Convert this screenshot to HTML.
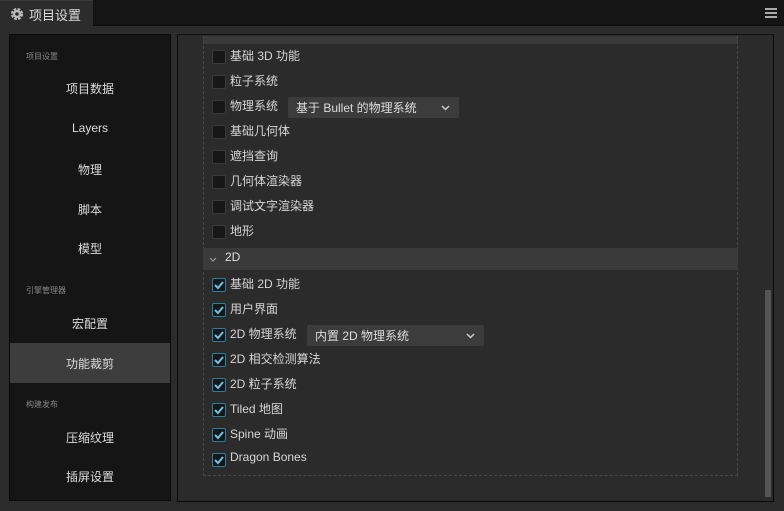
<!DOCTYPE html>
<html><head><meta charset="utf-8"><style>
*{margin:0;padding:0;box-sizing:border-box}
body{width:784px;height:511px;background:#2c2c2c;font-family:"Liberation Sans","Noto Sans CJK SC",sans-serif;color:#d6d6d6;font-size:12px;position:relative;overflow:hidden}
.top{position:absolute;left:0;top:0;width:784px;height:26px;background:#151515;border-bottom:1px solid #0c0c0c}
.tab{position:absolute;left:0;top:0;width:93px;height:26px;background:#2c2c2c;border-top:1px solid #3a3a3a}
.tab span{position:absolute;left:29px;top:4px;font-size:13px;color:#ddd}
.left{position:absolute;left:9px;top:34px;width:162px;height:467px;background:#151515;border:1px solid #0a0a0a}
.grp{position:absolute;left:16px;font-size:8px;color:#888}
.it{position:absolute;left:0;width:160px;text-align:center;font-size:12px;color:#ddd}
.sel{position:absolute;left:0;top:308px;width:160px;height:40px;background:#3d3d3d}
.right{position:absolute;left:177px;top:34px;width:597px;height:468px;background:#2b2b2b;border:1px solid #0a0a0a;border-top-color:#111}
.box{position:absolute;left:203px;top:36px;width:535px;height:440px;border-left:1px dashed #4a4a4a;border-right:1px dashed #4a4a4a;border-bottom:1px dashed #4a4a4a}
.hbar{position:absolute;left:203px;top:36px;width:535px;height:8px;background:#3a3a3a}
.h2{position:absolute;left:203px;top:248px;width:535px;height:22px;background:#3a3a3a}
.h2 span{position:absolute;left:22px;top:2px;color:#ddd}
.row{position:absolute;left:212px;height:14px}
.cb{position:absolute;left:0;top:0;width:14px;height:14px;background:#171717;border:1px solid #3a3a3a;border-radius:2px}
.cb.on{border-color:#2b7fa0;background:#171717}
.row .t{position:absolute;left:18px;top:-3px;white-space:nowrap;color:#d6d6d6}
.dd{position:absolute;height:21px;background:#3c3c3c;border-radius:2px;color:#ddd}
.dd span{position:absolute;left:8px;top:2px}
.sb{position:absolute;left:765px;top:290px;width:6px;height:207px;background:#555}
</style></head><body>
<div class="top"></div>
<div class="tab">
<svg style="position:absolute;left:10px;top:6px" width="14" height="14" viewBox="0 0 14 14"><circle cx="7" cy="7" r="4.5" fill="none" stroke="#bbb" stroke-width="3.2" stroke-dasharray="2.4 1.2"/><circle cx="7" cy="7" r="4" fill="#bbb"/><circle cx="7" cy="7" r="1.8" fill="#2c2c2c"/></svg>
<span>项目设置</span></div>
<svg style="position:absolute;left:765px;top:8px" width="12" height="11"><rect y="0" width="12" height="2" fill="#aaa"/><rect y="4" width="12" height="2" fill="#aaa"/><rect y="8" width="12" height="2" fill="#aaa"/></svg>
<div class="left">
<div class="grp" style="top:16px">项目设置</div>
<div class="it" style="top:45px">项目数据</div>
<div class="it" style="top:86px">Layers</div>
<div class="it" style="top:126px">物理</div>
<div class="it" style="top:166px">脚本</div>
<div class="it" style="top:205px">模型</div>
<div class="grp" style="top:250px">引擎管理器</div>
<div class="it" style="top:280px">宏配置</div>
<div class="sel"></div>
<div class="it" style="top:320px">功能裁剪</div>
<div class="grp" style="top:364px">构建发布</div>
<div class="it" style="top:394px">压缩纹理</div>
<div class="it" style="top:433px">插屏设置</div>
</div>
<div class="right"></div>
<div class="hbar"></div>
<div class="box"></div>
<div class="row" style="top:50px"><div class="cb"></div><div class="t">基础 3D 功能</div></div>
<div class="row" style="top:75px"><div class="cb"></div><div class="t">粒子系统</div></div>
<div class="row" style="top:100px"><div class="cb"></div><div class="t">物理系统</div></div>
<div class="dd" style="left:288px;top:97px;width:171px"><span>基于 Bullet 的物理系统</span><svg style="position:absolute;right:9px;top:8px" width="9" height="6"><path d="M1 1L4.5 4.5L8 1" fill="none" stroke="#ccc" stroke-width="1.5"/></svg></div>
<div class="row" style="top:125px"><div class="cb"></div><div class="t">基础几何体</div></div>
<div class="row" style="top:150px"><div class="cb"></div><div class="t">遮挡查询</div></div>
<div class="row" style="top:175px"><div class="cb"></div><div class="t">几何体渲染器</div></div>
<div class="row" style="top:200px"><div class="cb"></div><div class="t">调试文字渲染器</div></div>
<div class="row" style="top:225px"><div class="cb"></div><div class="t">地形</div></div>
<div class="h2"><svg style="position:absolute;left:6px;top:9px" width="8" height="5"><path d="M1 1L4 4L7 1" fill="none" stroke="#999" stroke-width="1.2"/></svg><span>2D</span></div>
<div class="row" style="top:278px"><div class="cb on"><svg width="12" height="12" style="position:absolute;left:0;top:0"><path d="M2 6L5 9L10 3" fill="none" stroke="#6ec3e6" stroke-width="2"/></svg></div><div class="t">基础 2D 功能</div></div>
<div class="row" style="top:303px"><div class="cb on"><svg width="12" height="12" style="position:absolute;left:0;top:0"><path d="M2 6L5 9L10 3" fill="none" stroke="#6ec3e6" stroke-width="2"/></svg></div><div class="t">用户界面</div></div>
<div class="row" style="top:328px"><div class="cb on"><svg width="12" height="12" style="position:absolute;left:0;top:0"><path d="M2 6L5 9L10 3" fill="none" stroke="#6ec3e6" stroke-width="2"/></svg></div><div class="t">2D 物理系统</div></div>
<div class="dd" style="left:307px;top:325px;width:177px"><span>内置 2D 物理系统</span><svg style="position:absolute;right:9px;top:8px" width="9" height="6"><path d="M1 1L4.5 4.5L8 1" fill="none" stroke="#ccc" stroke-width="1.5"/></svg></div>
<div class="row" style="top:353px"><div class="cb on"><svg width="12" height="12" style="position:absolute;left:0;top:0"><path d="M2 6L5 9L10 3" fill="none" stroke="#6ec3e6" stroke-width="2"/></svg></div><div class="t">2D 相交检测算法</div></div>
<div class="row" style="top:378px"><div class="cb on"><svg width="12" height="12" style="position:absolute;left:0;top:0"><path d="M2 6L5 9L10 3" fill="none" stroke="#6ec3e6" stroke-width="2"/></svg></div><div class="t">2D 粒子系统</div></div>
<div class="row" style="top:403px"><div class="cb on"><svg width="12" height="12" style="position:absolute;left:0;top:0"><path d="M2 6L5 9L10 3" fill="none" stroke="#6ec3e6" stroke-width="2"/></svg></div><div class="t">Tiled 地图</div></div>
<div class="row" style="top:428px"><div class="cb on"><svg width="12" height="12" style="position:absolute;left:0;top:0"><path d="M2 6L5 9L10 3" fill="none" stroke="#6ec3e6" stroke-width="2"/></svg></div><div class="t">Spine 动画</div></div>
<div class="row" style="top:453px"><div class="cb on"><svg width="12" height="12" style="position:absolute;left:0;top:0"><path d="M2 6L5 9L10 3" fill="none" stroke="#6ec3e6" stroke-width="2"/></svg></div><div class="t">Dragon Bones</div></div>
<div class="sb"></div>
</body></html>
